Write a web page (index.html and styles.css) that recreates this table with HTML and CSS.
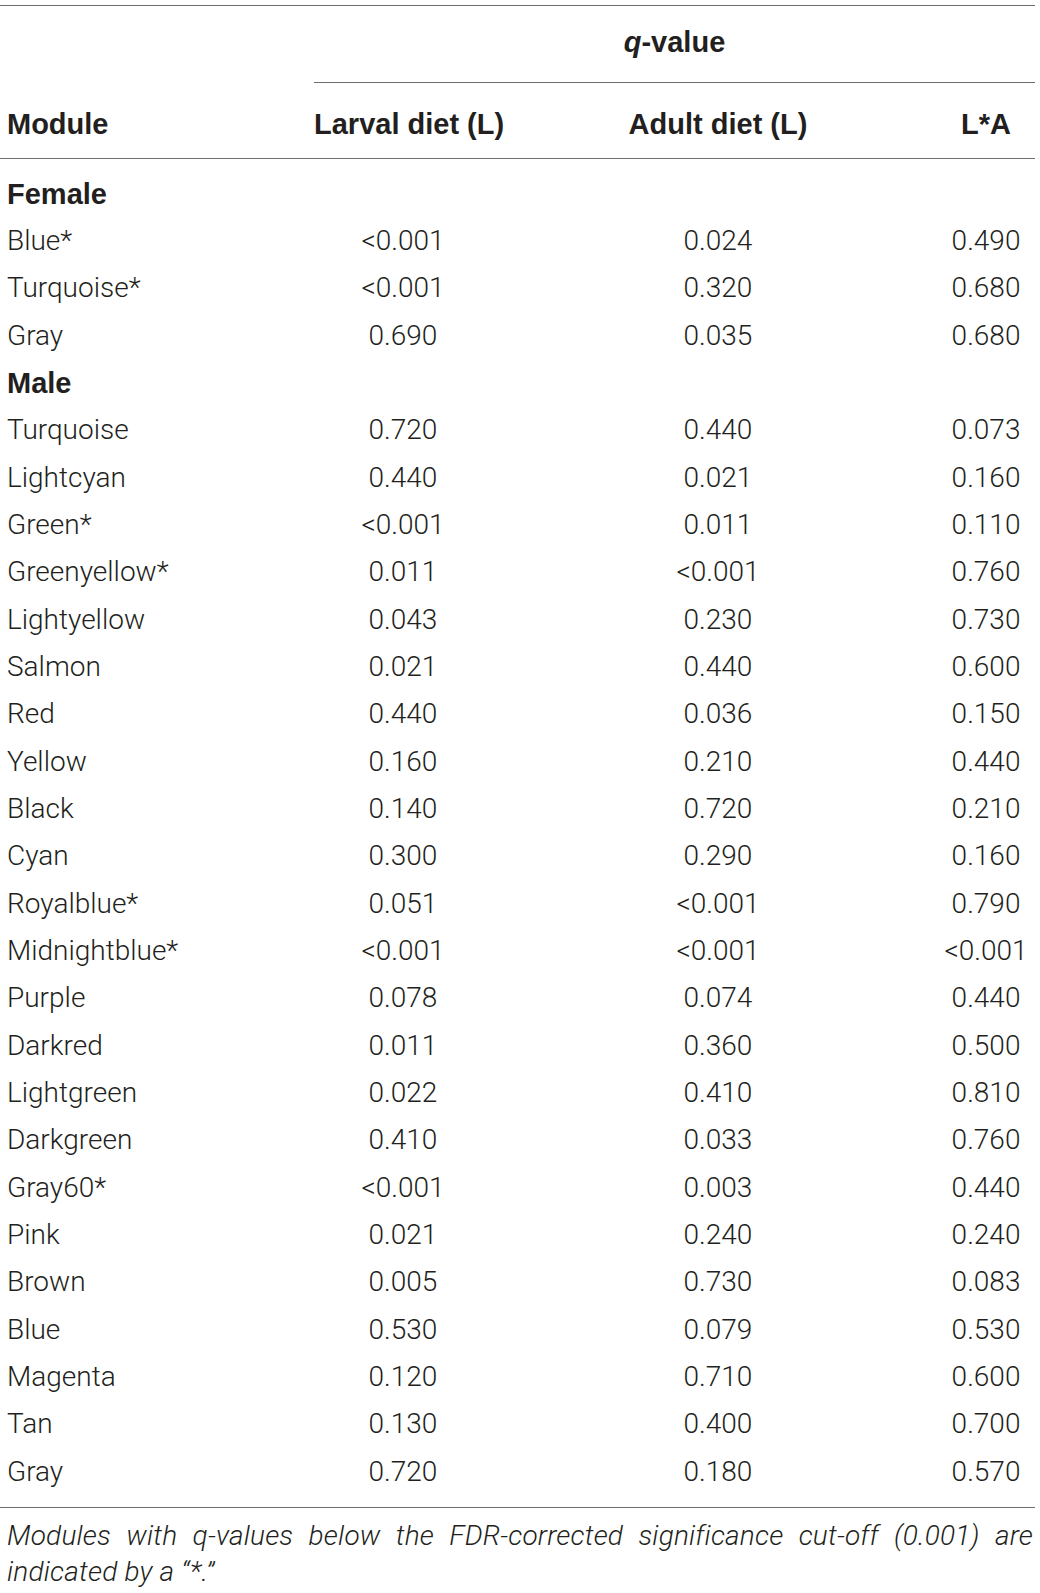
FILE: index.html
```html
<!DOCTYPE html>
<html>
<head>
<meta charset="utf-8">
<link rel="stylesheet" href="styles.css">
</head>
<body>
<div class="wrap">
<table class="qtable">
  <colgroup>
    <col class="c1"><col class="c2"><col class="c3"><col class="c4">
  </colgroup>
  <thead>
    <tr class="h1">
      <th></th>
      <th colspan="3" class="span"><span class="qv"><i>q</i>-value</span></th>
    </tr>
    <tr class="h2">
      <th class="mod">Module</th>
      <th>Larval diet (L)</th>
      <th>Adult diet (L)</th>
      <th class="last">L*A</th>
    </tr>
  </thead>
  <tbody>
    <tr class="grp first"><td>Female</td><td></td><td></td><td class="last"></td></tr>
    <tr><td>Blue*</td><td>&lt;0.001</td><td>0.024</td><td class="last">0.490</td></tr>
    <tr><td>Turquoise*</td><td>&lt;0.001</td><td>0.320</td><td class="last">0.680</td></tr>
    <tr><td>Gray</td><td>0.690</td><td>0.035</td><td class="last">0.680</td></tr>
    <tr class="grp"><td>Male</td><td></td><td></td><td class="last"></td></tr>
    <tr><td>Turquoise</td><td>0.720</td><td>0.440</td><td class="last">0.073</td></tr>
    <tr><td>Lightcyan</td><td>0.440</td><td>0.021</td><td class="last">0.160</td></tr>
    <tr><td>Green*</td><td>&lt;0.001</td><td>0.011</td><td class="last">0.110</td></tr>
    <tr><td>Greenyellow*</td><td>0.011</td><td>&lt;0.001</td><td class="last">0.760</td></tr>
    <tr><td>Lightyellow</td><td>0.043</td><td>0.230</td><td class="last">0.730</td></tr>
    <tr><td>Salmon</td><td>0.021</td><td>0.440</td><td class="last">0.600</td></tr>
    <tr><td>Red</td><td>0.440</td><td>0.036</td><td class="last">0.150</td></tr>
    <tr><td>Yellow</td><td>0.160</td><td>0.210</td><td class="last">0.440</td></tr>
    <tr><td>Black</td><td>0.140</td><td>0.720</td><td class="last">0.210</td></tr>
    <tr><td>Cyan</td><td>0.300</td><td>0.290</td><td class="last">0.160</td></tr>
    <tr><td>Royalblue*</td><td>0.051</td><td>&lt;0.001</td><td class="last">0.790</td></tr>
    <tr><td>Midnightblue*</td><td>&lt;0.001</td><td>&lt;0.001</td><td class="last">&lt;0.001</td></tr>
    <tr><td>Purple</td><td>0.078</td><td>0.074</td><td class="last">0.440</td></tr>
    <tr><td>Darkred</td><td>0.011</td><td>0.360</td><td class="last">0.500</td></tr>
    <tr><td>Lightgreen</td><td>0.022</td><td>0.410</td><td class="last">0.810</td></tr>
    <tr><td>Darkgreen</td><td>0.410</td><td>0.033</td><td class="last">0.760</td></tr>
    <tr><td>Gray60*</td><td>&lt;0.001</td><td>0.003</td><td class="last">0.440</td></tr>
    <tr><td>Pink</td><td>0.021</td><td>0.240</td><td class="last">0.240</td></tr>
    <tr><td>Brown</td><td>0.005</td><td>0.730</td><td class="last">0.083</td></tr>
    <tr><td>Blue</td><td>0.530</td><td>0.079</td><td class="last">0.530</td></tr>
    <tr><td>Magenta</td><td>0.120</td><td>0.710</td><td class="last">0.600</td></tr>
    <tr><td>Tan</td><td>0.130</td><td>0.400</td><td class="last">0.700</td></tr>
    <tr class="lastrow"><td>Gray</td><td>0.720</td><td>0.180</td><td class="last">0.570</td></tr>
  </tbody>
</table>
<p class="caption">Modules with q-values below the FDR-corrected significance cut-off (0.001) are indicated by a “*.”</p>
</div>
</body>
</html>
```

FILE: styles.css
```css
html, body {
  margin: 0;
  padding: 0;
  background: #ffffff;
}

body {
  color: #231f20;
  font-family: Roboto, "Liberation Sans", Arial, sans-serif;
  font-weight: 300;
  font-size: 28px;
}

.wrap {
  width: 1035px;
  padding-top: 5px;
}

.qtable {
  width: 1035px;
  border-collapse: collapse;
  table-layout: fixed;
  border-top: 1px solid #6e6e6e;
  border-bottom: 1px solid #6e6e6e;
}

.c1 { width: 314px; }
.c2 { width: 178px; }
.c3 { width: 452px; }
.c4 { width: 91px; }

.qtable th {
  font-family: "Liberation Sans", Arial, sans-serif;
  font-weight: 700;
  font-size: 29px;
  text-align: center;
  line-height: 32px;
  white-space: nowrap;
  vertical-align: top;
}

.qtable .h1 th {
  padding: 20px 0 24px;
}

.qtable .h1 th.span {
  border-bottom: 1px solid #6e6e6e;
}

.qtable .h2 th {
  padding: 25px 0 18px;
  border-bottom: 1px solid #6e6e6e;
}

.qtable .h2 th.mod {
  text-align: left;
  padding-left: 7px;
}

.qtable .h2 th.last {
  padding-right: 7px;
}

.qv i {
  font-style: italic;
}

.qtable td {
  height: 47.33px;
  padding: 0;
  text-align: center;
  vertical-align: middle;
  line-height: 32px;
  white-space: nowrap;
}

.qtable td:first-child {
  text-align: left;
  padding-left: 7px;
}

.qtable .last {
  padding-right: 7px;
}

.qtable tr.grp td:first-child {
  font-family: "Liberation Sans", Arial, sans-serif;
  font-weight: 700;
  font-size: 29px;
}

.qtable tr.first td {
  padding-top: 11px;
}

.qtable tr.lastrow td {
  padding-bottom: 12px;
}

.caption {
  margin: 0;
  padding: 10px 2px 0 7px;
  font-style: italic;
  font-weight: 300;
  font-size: 28px;
  letter-spacing: 0.2px;
  line-height: 36px;
  text-align: justify;
}
```
